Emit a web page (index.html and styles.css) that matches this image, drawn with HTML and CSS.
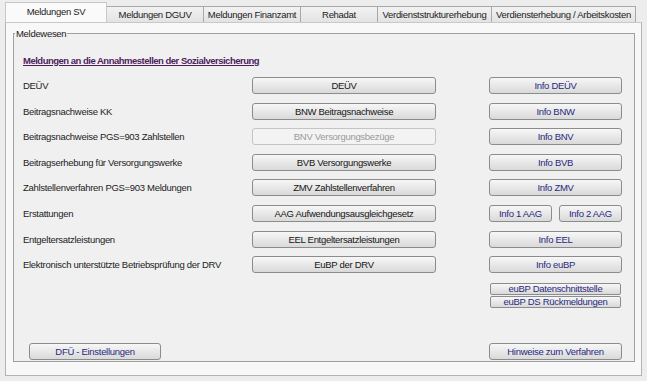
FILE: index.html
```html
<!DOCTYPE html>
<html lang="de">
<head>
  <meta charset="UTF-8">
  <title>Meldungen SV</title>
  <link rel="stylesheet" href="styles.css">
</head>
<body>
  <div class="tabs">
    <div class="tab active t1">Meldungen SV</div>
    <div class="tab t2">Meldungen DGUV</div>
    <div class="tab t3">Meldungen Finanzamt</div>
    <div class="tab t4">Rehadat</div>
    <div class="tab t5">Verdienststrukturerhebung</div>
    <div class="tab t6">Verdiensterhebung / Arbeitskosten</div>
  </div>
  <div class="panel">
    <fieldset class="group">
      <legend>Meldewesen</legend>
      <p class="head">Meldungen an die Annahmestellen der Sozialversicherung</p>
      <div class="rows">
        <span class="lbl">DEÜV</span>
        <button class="btn">DEÜV</button>
        <button class="btn info">Info DEÜV</button>

        <span class="lbl">Beitragsnachweise KK</span>
        <button class="btn">BNW Beitragsnachweise</button>
        <button class="btn info">Info BNW</button>

        <span class="lbl">Beitragsnachweise PGS=903 Zahlstellen</span>
        <button class="btn" disabled>BNV Versorgungsbezüge</button>
        <button class="btn info">Info BNV</button>

        <span class="lbl">Beitragserhebung für Versorgungswerke</span>
        <button class="btn">BVB Versorgungswerke</button>
        <button class="btn info">Info BVB</button>

        <span class="lbl">Zahlstellenverfahren PGS=903 Meldungen</span>
        <button class="btn">ZMV Zahlstellenverfahren</button>
        <button class="btn info">Info ZMV</button>

        <span class="lbl">Erstattungen</span>
        <button class="btn">AAG Aufwendungsausgleichgesetz</button>
        <div class="pair">
          <button class="btn info">Info 1 AAG</button>
          <button class="btn info">Info 2 AAG</button>
        </div>

        <span class="lbl">Entgeltersatzleistungen</span>
        <button class="btn">EEL Entgeltersatzleistungen</button>
        <button class="btn info">Info EEL</button>

        <span class="lbl">Elektronisch unterstützte Betriebsprüfung der DRV</span>
        <button class="btn">EuBP der DRV</button>
        <button class="btn info">Info euBP</button>
      </div>
      <div class="stack">
        <button class="btn info small">euBP Datenschnittstelle</button>
        <button class="btn info small">euBP DS Rückmeldungen</button>
      </div>
      <div class="foot">
        <button class="btn info dfu">DFÜ - Einstellungen</button>
        <button class="btn info hint">Hinweise zum Verfahren</button>
      </div>
    </fieldset>
  </div>
</body>
</html>
```

FILE: styles.css
```css
body {
    margin: 0;
    background-color: #ededed;
    font-family: "Liberation Sans", Arial, sans-serif;
    font-size: 9.5px;
    letter-spacing: -0.3px;
    color: #1c1c1c;
    width: 647px;
    height: 381px;
    overflow: hidden;
}
.tabs {
    display: flex;
    align-items: flex-end;
    height: 22px;
    padding-left: 5px;
}
.tab {
    height: 15px;
    line-height: 15px;
    text-align: center;
    white-space: nowrap;
    border: 1px solid #a8a8a8;
    border-bottom: none;
    border-left: none;
    background: linear-gradient(#f2f2f2, #e3e3e3);
    color: #222;
}
.tab.active {
    height: 19px;
    line-height: 17px;
    background: #fafafa;
    border-left: 1px solid #c8c8c8;
    border-color: #c8c8c8;
}
.t1 { width: 100px; }
.t2 { width: 96px; }
.t3 { width: 96px; }
.t4 { width: 76px; }
.t5 { width: 113px; }
.t6 { width: 143px; }

.panel {
    margin: 0 5px;
    height: 354px;
    box-sizing: border-box;
    padding: 4px 6px 13px 7px;
    background-color: #f8f8f8;
    border: 1px solid #b4b4b4;
    border-top-color: #c8c8c8;
}
.group {
    margin: 0;
    height: 100%;
    box-sizing: border-box;
    padding: 0 12px 1px 9px;
    border: 1px solid #a0a0a0;
    background-color: #f0f0f0;
    display: flex;
    flex-direction: column;
    min-width: 0;
}
.group legend {
    padding: 0 1px;
    margin-left: -8px;
    line-height: 13px;
    color: #222;
}
.head {
    margin: 14px 0 10px;
    font-weight: bold;
    letter-spacing: -0.5px;
    text-decoration: underline;
    color: #4d1d5e;
    line-height: 13px;
}
.rows {
    display: grid;
    grid-template-columns: 229px 184px 1fr;
    grid-auto-rows: 17px;
    row-gap: 8.6px;
    align-items: center;
}
.lbl {
    white-space: nowrap;
    color: #1c1c1c;
}
.btn {
    height: 17px;
    padding: 0;
    margin: 0;
    font-family: "Liberation Sans", Arial, sans-serif;
    font-size: 9.5px;
    letter-spacing: -0.3px;
    white-space: nowrap;
    color: #151515;
    border: 1px solid #8c8c8c;
    border-radius: 3px;
    background: linear-gradient(#f7f7f7, #e8e8e8 50%, #d9d9d9);
}
.btn:disabled {
    color: #9a9a9a;
    border-color: #c4c4c4;
    background: #f3f3f3;
}
.info {
    color: #29297e;
}
.rows > .info,
.pair {
    width: 133px;
    justify-self: end;
}
.pair {
    display: flex;
    justify-content: space-between;
}
.pair .btn {
    width: 63px;
}
.stack {
    display: flex;
    flex-direction: column;
    align-items: flex-end;
    gap: 1px;
    margin-top: 10px;
    padding-right: 1px;
}
.stack .btn {
    width: 131px;
    height: 12px;
    line-height: 10px;
    border-radius: 2px;
}
.foot {
    margin-top: auto;
    display: flex;
    justify-content: space-between;
    margin-left: 6px;
}
.dfu {
    width: 132px;
}
.hint {
    width: 133px;
}
```
